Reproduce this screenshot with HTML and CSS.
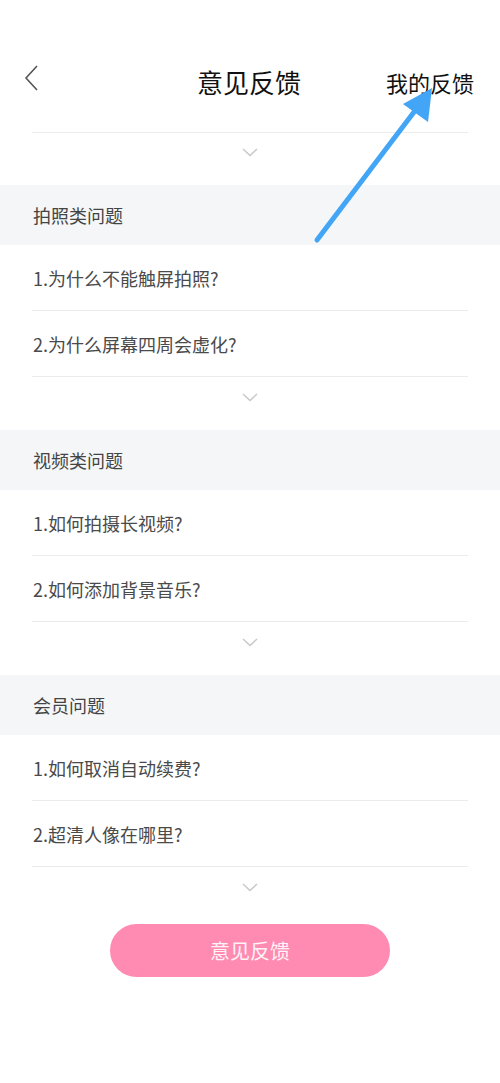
FILE: index.html
```html
<!DOCTYPE html>
<html lang="zh">
<head>
<meta charset="utf-8">
<title>意见反馈</title>
<link rel="stylesheet" href="styles.css">
</head>
<body>
<div class="page">
  <header class="topbar">
    <svg class="back" width="16" height="26" viewBox="0 0 16 26"><path d="M13 1 L2 13 L13 25" fill="none" stroke="#555" stroke-width="1.6"/></svg>
    <h1 class="title">意见反馈</h1>
    <span class="mine">我的反馈</span>
  </header>
  <div class="rule"></div>
  <div class="more"><svg width="16" height="9" viewBox="0 0 16 9"><path d="M1 1 L8 7.5 L15 1" fill="none" stroke="#c8c8c8" stroke-width="1.5"/></svg></div>

  <section class="group">
    <div class="group-title">拍照类问题</div>
    <div class="item">1.为什么不能触屏拍照?</div>
    <div class="item">2.为什么屏幕四周会虚化?</div>
    <div class="more"><svg width="16" height="9" viewBox="0 0 16 9"><path d="M1 1 L8 7.5 L15 1" fill="none" stroke="#c8c8c8" stroke-width="1.5"/></svg></div>
  </section>

  <section class="group">
    <div class="group-title">视频类问题</div>
    <div class="item">1.如何拍摄长视频?</div>
    <div class="item">2.如何添加背景音乐?</div>
    <div class="more"><svg width="16" height="9" viewBox="0 0 16 9"><path d="M1 1 L8 7.5 L15 1" fill="none" stroke="#c8c8c8" stroke-width="1.5"/></svg></div>
  </section>

  <section class="group">
    <div class="group-title">会员问题</div>
    <div class="item">1.如何取消自动续费?</div>
    <div class="item">2.超清人像在哪里?</div>
    <div class="more"><svg width="16" height="9" viewBox="0 0 16 9"><path d="M1 1 L8 7.5 L15 1" fill="none" stroke="#c8c8c8" stroke-width="1.5"/></svg></div>
  </section>

  <div class="btn-wrap"><button class="btn">意见反馈</button></div>

  <svg class="arrow" width="500" height="260" viewBox="0 0 500 260">
    <line x1="317" y1="240" x2="414" y2="112" stroke="#42a5f5" stroke-width="5" stroke-linecap="round"/>
    <polygon points="432,88 428,122 403,104" fill="#42a5f5"/>
  </svg>
</div>
</body>
</html>
```
FILE: styles.css
```css
* { box-sizing: border-box; }
html, body { margin: 0; padding: 0; background: #fff; }
body {
  font-family: "Noto Sans CJK SC", "Noto Sans", sans-serif;
  color: #4a4a4a;
}
.page { position: relative; width: 500px; height: 1083px; overflow: hidden; }
.topbar {
  display: grid;
  grid-template-columns: 1fr auto 1fr;
  align-items: center;
  height: 132px;
  padding: 52px 26px 20px 24px;
}
.back { display: block; margin-top: -8px; }
.title {
  margin: 0;
  font-size: 26px;
  font-weight: 400;
  color: #111;
  line-height: 40px;
}
.mine {
  justify-self: end;
  font-size: 22px;
  color: #111;
  line-height: 40px;
}
.rule { height: 1px; margin: 0 32px; background: #ececec; }
.more {
  height: 52px;
  display: flex;
  justify-content: center;
  padding-top: 15px;
}
.more svg { display: block; }
.group-title {
  height: 60px;
  background: #f5f6f8;
  padding-left: 33px;
  display: flex;
  align-items: center;
  font-size: 18px;
  color: #444;
}
.item {
  height: 66px;
  margin: 0 32px;
  border-bottom: 1px solid #ececec;
  display: flex;
  align-items: center;
  font-size: 18px;
  color: #4a4a4a;
  padding-left: 1px;
}
.item:first-of-type { height: 67px; }
.group .more { height: 53px; padding-top: 16px; }
.btn-wrap { display: flex; justify-content: center; padding-top: 4px; }
.btn {
  width: 280px;
  height: 53px;
  border: none;
  border-radius: 27px;
  background: #ff8ab2;
  color: #fff3f7;
  font-family: inherit;
  font-size: 20px;
}
.arrow { position: absolute; left: 0; top: 0; pointer-events: none; }
```
